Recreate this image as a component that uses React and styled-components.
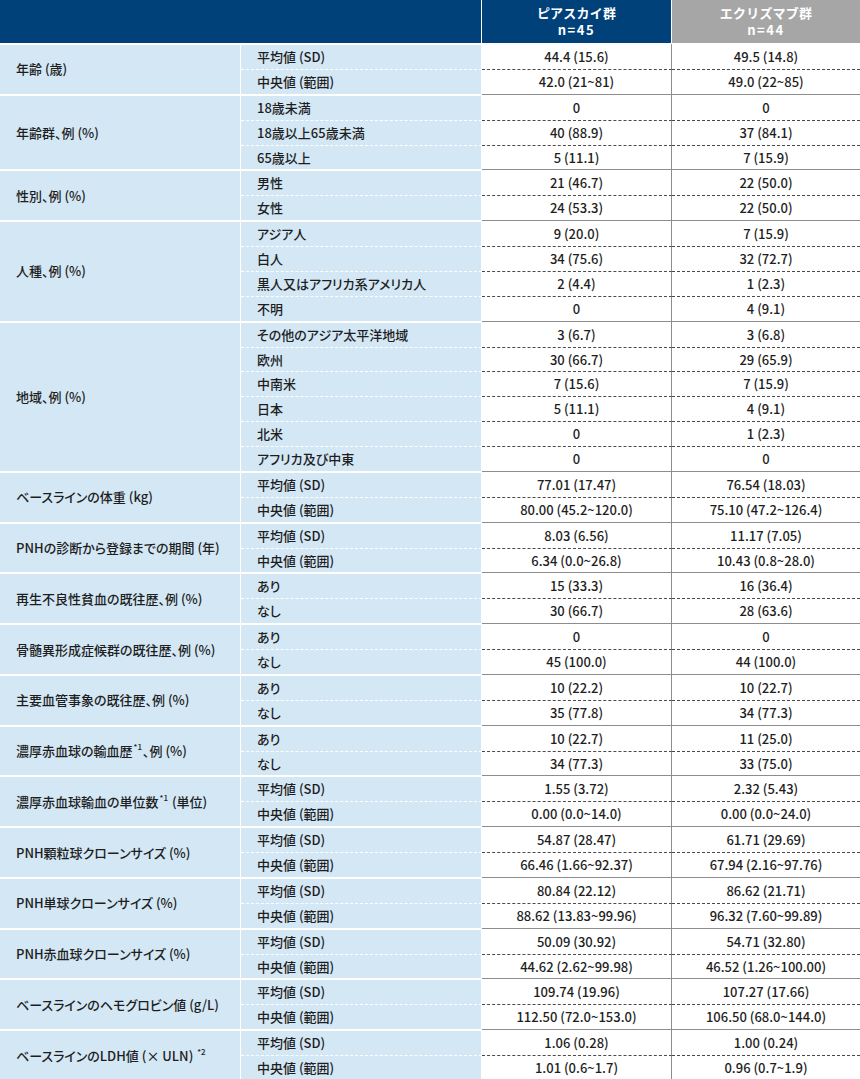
import React from 'react';
import styled, { createGlobalStyle } from 'styled-components';

const Global = createGlobalStyle`
  html, body { margin: 0; padding: 0; background: #fff; }
  body {
    font-family: "Noto Sans CJK JP", "Noto Sans", sans-serif;
    color: #1e1e1e;
  }
  *, *::before, *::after { box-sizing: border-box; }
`;

const BLUE = '#d3e7f5';
const NAVY = '#00417a';
const GRAY_HEAD = '#a6a6a6';
const LINE = '#8d8d8d';
const ROW = '23.88px';

const Table = styled.table`
  width: 860px;
  table-layout: fixed;
  border-collapse: separate;
  border-spacing: 0;
  font-size: 13px;
  font-weight: 500;
  font-feature-settings: "palt";
`;

const Col = styled.col`
  width: ${(p) => p.$w}px;
`;

const HeadCell = styled.th`
  height: 43px;
  padding: 0 0 1px;
  background: ${(p) => (p.$tone === 'gray' ? GRAY_HEAD : NAVY)};
  color: #fff;
  font-weight: 700;
  font-size: 13px;
  font-feature-settings: normal;
  text-align: center;
  vertical-align: middle;
  border-right: ${(p) => (p.$end ? '0' : '1px solid #fff')};
`;

const HeadLine = styled.span`
  display: block;
  line-height: 17px;
  letter-spacing: ${(p) => (p.$wide ? '1.6px' : '0.2px')};
`;

const GroupLabel = styled.td`
  background: ${BLUE};
  padding: 0 8px 0 16px;
  border-top: 2px solid #fff;
  border-right: 1px solid #fff;
  vertical-align: middle;
  line-height: 18px;
  white-space: nowrap;
`;

const SubLabel = styled.td`
  background: ${BLUE};
  padding: 0 0 0 16px;
  line-height: ${ROW};
  white-space: nowrap;
  border-top: ${(p) => (p.$first ? '2px solid #fff' : '0')};
  border-bottom: ${(p) => (p.$last ? '0' : '1px dashed #fff')};
  border-right: 1px solid #fff;
`;

const Value = styled.td`
  background: #fff;
  padding: ${(p) => (p.$first && !p.$top ? '1px 0 0' : '0')};
  text-align: center;
  line-height: ${ROW};
  white-space: nowrap;
  border-top: ${(p) =>
    p.$first ? (p.$top ? '2px solid #fff' : `1px solid ${LINE}`) : '0'};
  border-bottom: ${(p) => (p.$last ? '0' : '1px dashed #4a4a4a')};
  border-right: ${(p) => (p.$divider ? `1px solid ${LINE}` : '0')};
`;

const Note = styled.sup`
  font-size: 8px;
  line-height: 0;
  vertical-align: 6px;
  margin: 0 1px;
`;

const MEAN = '平均値 (SD)';
const MEDIAN = '中央値 (範囲)';

const groups = [
  { label: '年齢 (歳)', rows: [[MEAN, '44.4 (15.6)', '49.5 (14.8)'], [MEDIAN, '42.0 (21~81)', '49.0 (22~85)']] },
  {
    label: '年齢群、例 (%)',
    rows: [
      ['18歳未満', '0', '0'],
      ['18歳以上65歳未満', '40 (88.9)', '37 (84.1)'],
      ['65歳以上', '5 (11.1)', '7 (15.9)'],
    ],
  },
  { label: '性別、例 (%)', rows: [['男性', '21 (46.7)', '22 (50.0)'], ['女性', '24 (53.3)', '22 (50.0)']] },
  {
    label: '人種、例 (%)',
    rows: [
      ['アジア人', '9 (20.0)', '7 (15.9)'],
      ['白人', '34 (75.6)', '32 (72.7)'],
      ['黒人又はアフリカ系アメリカ人', '2 (4.4)', '1 (2.3)'],
      ['不明', '0', '4 (9.1)'],
    ],
  },
  {
    label: '地域、例 (%)',
    rows: [
      ['その他のアジア太平洋地域', '3 (6.7)', '3 (6.8)'],
      ['欧州', '30 (66.7)', '29 (65.9)'],
      ['中南米', '7 (15.6)', '7 (15.9)'],
      ['日本', '5 (11.1)', '4 (9.1)'],
      ['北米', '0', '1 (2.3)'],
      ['アフリカ及び中東', '0', '0'],
    ],
  },
  { label: 'ベースラインの体重 (kg)', rows: [[MEAN, '77.01 (17.47)', '76.54 (18.03)'], [MEDIAN, '80.00 (45.2~120.0)', '75.10 (47.2~126.4)']] },
  { label: 'PNHの診断から登録までの期間 (年)', rows: [[MEAN, '8.03 (6.56)', '11.17 (7.05)'], [MEDIAN, '6.34 (0.0~26.8)', '10.43 (0.8~28.0)']] },
  { label: '再生不良性貧血の既往歴、例 (%)', rows: [['あり', '15 (33.3)', '16 (36.4)'], ['なし', '30 (66.7)', '28 (63.6)']] },
  { label: '骨髄異形成症候群の既往歴、例 (%)', rows: [['あり', '0', '0'], ['なし', '45 (100.0)', '44 (100.0)']] },
  { label: '主要血管事象の既往歴、例 (%)', rows: [['あり', '10 (22.2)', '10 (22.7)'], ['なし', '35 (77.8)', '34 (77.3)']] },
  {
    label: (
      <>
        濃厚赤血球の輸血歴<Note>*1</Note>、例 (%)
      </>
    ),
    rows: [['あり', '10 (22.7)', '11 (25.0)'], ['なし', '34 (77.3)', '33 (75.0)']],
  },
  {
    label: (
      <>
        濃厚赤血球輸血の単位数<Note>*1</Note> (単位)
      </>
    ),
    rows: [[MEAN, '1.55 (3.72)', '2.32 (5.43)'], [MEDIAN, '0.00 (0.0~14.0)', '0.00 (0.0~24.0)']],
  },
  { label: 'PNH顆粒球クローンサイズ (%)', rows: [[MEAN, '54.87 (28.47)', '61.71 (29.69)'], [MEDIAN, '66.46 (1.66~92.37)', '67.94 (2.16~97.76)']] },
  { label: 'PNH単球クローンサイズ (%)', rows: [[MEAN, '80.84 (22.12)', '86.62 (21.71)'], [MEDIAN, '88.62 (13.83~99.96)', '96.32 (7.60~99.89)']] },
  { label: 'PNH赤血球クローンサイズ (%)', rows: [[MEAN, '50.09 (30.92)', '54.71 (32.80)'], [MEDIAN, '44.62 (2.62~99.98)', '46.52 (1.26~100.00)']] },
  { label: 'ベースラインのヘモグロビン値 (g/L)', rows: [[MEAN, '109.74 (19.96)', '107.27 (17.66)'], [MEDIAN, '112.50 (72.0~153.0)', '106.50 (68.0~144.0)']] },
  {
    label: (
      <>
        ベースラインのLDH値 (× ULN) <Note>*2</Note>
      </>
    ),
    rows: [[MEAN, '1.06 (0.28)', '1.00 (0.24)'], [MEDIAN, '1.01 (0.6~1.7)', '0.96 (0.7~1.9)']],
  },
];

export default function App() {
  return (
    <>
      <Global />
      <Table>
        <colgroup>
          <Col $w={241} />
          <Col $w={241} />
          <Col $w={190} />
          <Col $w={188} />
        </colgroup>
        <thead>
          <tr>
            <HeadCell colSpan={2} />
            <HeadCell>
              <HeadLine>ピアスカイ群</HeadLine>
              <HeadLine $wide>n=45</HeadLine>
            </HeadCell>
            <HeadCell $tone="gray" $end>
              <HeadLine>エクリズマブ群</HeadLine>
              <HeadLine $wide>n=44</HeadLine>
            </HeadCell>
          </tr>
        </thead>
        <tbody>
          {groups.map((g, gi) =>
            g.rows.map((r, ri) => {
              const first = ri === 0;
              const last = ri === g.rows.length - 1;
              const top = gi === 0;
              return (
                <tr key={`${gi}-${ri}`}>
                  {first && <GroupLabel rowSpan={g.rows.length}>{g.label}</GroupLabel>}
                  <SubLabel $first={first} $last={last}>
                    {r[0]}
                  </SubLabel>
                  <Value $first={first} $last={last} $top={top} $divider>
                    {r[1]}
                  </Value>
                  <Value $first={first} $last={last} $top={top}>
                    {r[2]}
                  </Value>
                </tr>
              );
            })
          )}
        </tbody>
      </Table>
    </>
  );
}
